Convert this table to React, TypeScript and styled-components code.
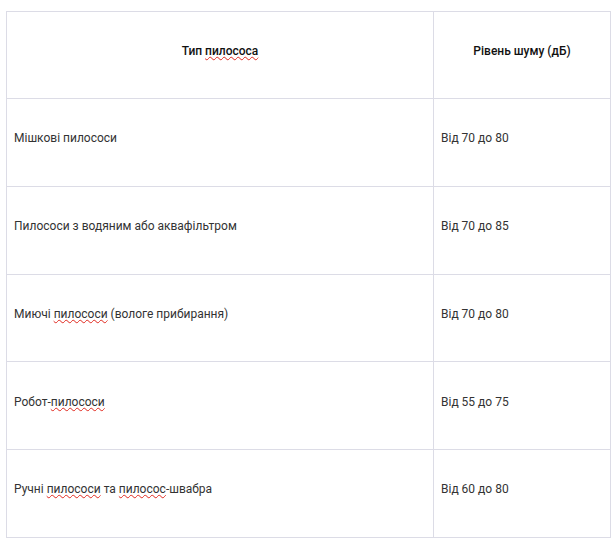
import React from "react";
import styled, { createGlobalStyle } from "styled-components";

const Global = createGlobalStyle`
  html, body { margin: 0; padding: 0; background: #ffffff; }
  body { font-family: Roboto, "Liberation Sans", Arial, sans-serif; }
`;

const Page = styled.div`
  padding: 11px 0 0 6px;
`;

const Table = styled.table`
  border-collapse: collapse;
  width: 604px;
  table-layout: fixed;
  color: #333333;
  font-size: 12px;
`;

const Col = styled.col<{ $w: number }>`
  width: ${(p) => p.$w}px;
`;

const Cell = styled.td<{ $head?: boolean }>`
  border: 1px solid #dcdce6;
  height: ${(p) => (p.$head ? "87px" : "87.75px")};
  box-sizing: border-box;
  padding: 0 7px 8px 7px;
  vertical-align: middle;
  text-align: ${(p) => (p.$head ? "center" : "left")};
  font-weight: ${(p) => (p.$head ? 500 : 400)};
  color: ${(p) => (p.$head ? "#111111" : "#333333")};
  line-height: 16px;
`;

const Misspelled = styled.span`
  text-decoration: underline wavy #e0281e;
  text-decoration-thickness: 1px;
  text-underline-offset: 1px;
`;

const rows: { name: React.ReactNode; noise: string }[] = [
  { name: "Мішкові пилососи", noise: "Від 70 до 80" },
  { name: "Пилососи з водяним або аквафільтром", noise: "Від 70 до 85" },
  {
    name: (
      <>
        Миючі <Misspelled>пилососи</Misspelled> (вологе прибирання)
      </>
    ),
    noise: "Від 70 до 80",
  },
  {
    name: (
      <>
        Робот-<Misspelled>пилососи</Misspelled>
      </>
    ),
    noise: "Від 55 до 75",
  },
  {
    name: (
      <>
        Ручні <Misspelled>пилососи</Misspelled> та <Misspelled>пилосос</Misspelled>-швабра
      </>
    ),
    noise: "Від 60 до 80",
  },
];

export default function App() {
  return (
    <>
      <Global />
      <Page>
        <Table>
          <colgroup>
            <Col $w={427} />
            <Col $w={177} />
          </colgroup>
          <thead>
            <tr>
              <Cell as="th" $head>
                Тип <Misspelled>пилососа</Misspelled>
              </Cell>
              <Cell as="th" $head>
                Рівень шуму (дБ)
              </Cell>
            </tr>
          </thead>
          <tbody>
            {rows.map((r, i) => (
              <tr key={i}>
                <Cell>{r.name}</Cell>
                <Cell>{r.noise}</Cell>
              </tr>
            ))}
          </tbody>
        </Table>
      </Page>
    </>
  );
}
